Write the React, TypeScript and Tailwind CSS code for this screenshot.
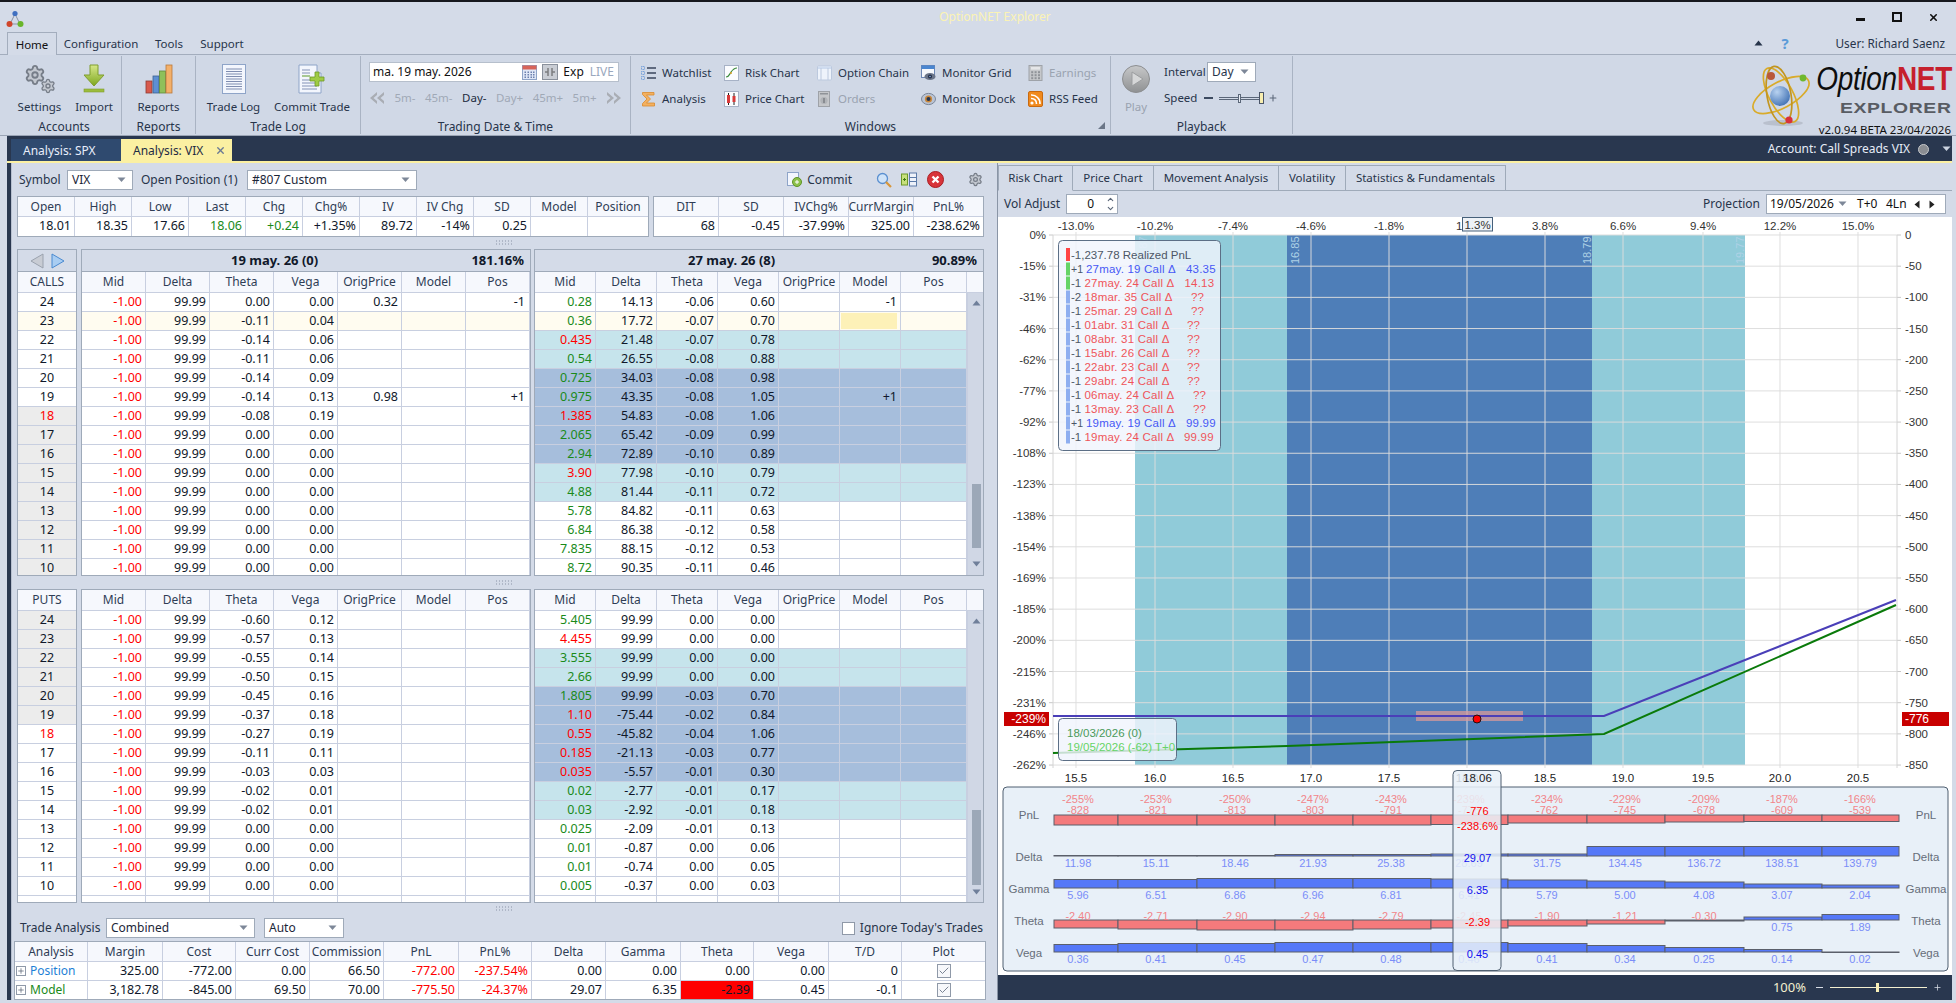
import React from 'react';
import { Settings as Gear, Check, X, Plus, ChevronUp, ChevronDown } from 'lucide-react';

const Caret = ({ c = '#7d8798' }: { c?: string }) => (
  <svg width="9" height="6" viewBox="0 0 9 6" className="shrink-0"><path d="M0.5 0.5h8L4.5 5z" fill={c} /></svg>
);

const Select = ({ w, label }: { w: string; label: string }) => (
  <div className={`${w} h-[20px] bg-white border border-[#9faab9] flex items-center justify-between pl-[4px] pr-[6px] text-[12px] text-[#1b2638] shrink-0`}>
    <span>{label}</span>
    <Caret />
  </div>
);

/* ---------- ribbon icons ---------- */
const AppIcon = () => (
  <svg width="18" height="18" viewBox="0 0 18 18">
    <path d="M9 4L4 14H14Z" fill="none" stroke="#8a93a3" strokeWidth="1" />
    <circle cx="9" cy="3.5" r="2.6" fill="#3f6fc0" />
    <circle cx="3.5" cy="14" r="3" fill="#d0452b" />
    <circle cx="14.5" cy="14" r="3" fill="#69b52b" />
  </svg>
);
const ImportIcon = () => (
  <svg width="22" height="29" viewBox="0 0 22 29">
    <defs><linearGradient id="imp" x1="0" y1="0" x2="0" y2="1"><stop offset="0" stopColor="#d7e88a" /><stop offset="1" stopColor="#7da71f" /></linearGradient></defs>
    <path d="M7 1h8v10h6L11 22 1 11h6z" fill="url(#imp)" stroke="#7f9d2f" strokeWidth="1" />
    <rect x="1" y="25" width="20" height="3" fill="#9cbc3c" stroke="#7f9d2f" strokeWidth="0.6" />
  </svg>
);
const ReportsIcon = () => (
  <svg width="28" height="30" viewBox="0 0 28 30">
    <rect x="1" y="17" width="6" height="12" fill="#d85a4d" stroke="#8f3a33" strokeWidth="0.8" />
    <rect x="8" y="12" width="6" height="17" fill="#5d8fd3" stroke="#3d628f" strokeWidth="0.8" />
    <rect x="14.5" y="7" width="6" height="22" fill="#8fc05a" stroke="#5f8a38" strokeWidth="0.8" />
    <rect x="21" y="1" width="6" height="28" fill="#f3b06a" stroke="#b9793a" strokeWidth="0.8" />
  </svg>
);
const TradeLogIcon = () => (
  <svg width="24" height="30" viewBox="0 0 24 30">
    <rect x="0.5" y="0.5" width="23" height="29" fill="#f3f6fd" stroke="#8ea4c8" />
    {[5, 7.5, 10, 12.5, 15, 17.5, 20, 22.5, 25].map((y) => <line key={y} x1="4" x2="20" y1={y} y2={y} stroke="#7f8db0" strokeWidth="1" />)}
  </svg>
);
const CommitIcon = () => (
  <svg width="28" height="30" viewBox="0 0 28 30">
    <path d="M1 1H19V9H23V29H1Z" fill="#f3f6fd" stroke="#8ea4c8" />
    {[6, 9, 12, 16, 19, 22, 25].map((y) => <line key={y} x1="4" x2={y > 14 ? 19 : 12} y1={y} y2={y} stroke={y === 12 ? '#5a9a2a' : '#8392b6'} strokeWidth="1" />)}
    <path d="M17 8h4v5h5v4h-5v5h-4v-5h-5v-4h5z" fill="#9fcb45" stroke="#6d9a27" strokeWidth="0.8" />
  </svg>
);
const Doc = ({ children }: { children: React.ReactNode }) => (
  <svg width="15" height="16" viewBox="0 0 15 16" className="shrink-0">{children}</svg>
);
const WatchIcon = () => (
  <Doc>
    {[3, 8, 13].map((y) => <rect key={y} x="0.5" y={y - 1.5} width="3" height="3" fill="none" stroke="#5c8fd6" strokeDasharray="1 0.6" strokeWidth="0.8" />)}
    {[3, 8, 13].map((y) => <line key={y} x1="6" x2="15" y1={y} y2={y} stroke="#2f3b52" strokeWidth="1.4" />)}
  </Doc>
);
const SigmaIcon = () => (
  <Doc><path d="M1.5 1.5H13V4L5.5 4 9.5 8 5.5 12H13.5V15H1.5V12.5L6 8 1.5 3.5Z" fill="#f3b060" stroke="#d98a2c" strokeWidth="0.8" /></Doc>
);
const RiskIcon = () => (
  <Doc><rect x="0.5" y="0.5" width="14" height="15" fill="#fbfcff" stroke="#a7b2c6" /><path d="M2 12C5 12 5 10 7 7 8.5 5 10 3 13 3" fill="none" stroke="#3a8a3a" strokeWidth="1.2" /><circle cx="7" cy="8" r="1" fill="#d8a02a" /></Doc>
);
const PriceIcon = () => (
  <Doc><rect x="0.5" y="0.5" width="14" height="15" fill="#fbfcff" stroke="#a7b2c6" /><line x1="4.5" y1="2" x2="4.5" y2="14" stroke="#222" /><rect x="3" y="4" width="3" height="8" fill="#d83a3a" /><line x1="10" y1="2" x2="10" y2="14" stroke="#222" /><rect x="8.5" y="5" width="3" height="6" fill="#d83a3a" /></Doc>
);
const ChainIcon = () => (
  <Doc><rect x="0.5" y="1" width="14" height="14" rx="1" fill="#eef3fb" stroke="#bcc9de" /><rect x="1" y="1.5" width="13" height="2.5" fill="#cfdcf0" /><line x1="4" x2="4" y1="3" y2="15" stroke="#bcc9de" /><line x1="11" x2="11" y1="3" y2="15" stroke="#bcc9de" /></Doc>
);
const GridIcon = () => (
  <Doc><rect x="0.5" y="0.5" width="13" height="12" fill="#f6f8fc" stroke="#6d87b4" /><rect x="0.5" y="0.5" width="13" height="3.5" fill="#4a86d0" /><ellipse cx="9" cy="11.5" rx="5.5" ry="3.6" fill="#6a7488" /><circle cx="9" cy="11.5" r="2" fill="#1e2a44" /><circle cx="9" cy="11.5" r="0.8" fill="#8fb4e4" /></Doc>
);
const DockIcon = () => (
  <Doc><ellipse cx="7.5" cy="8" rx="7" ry="5.6" fill="#b9c3d4" stroke="#7a8699" /><circle cx="7.5" cy="8" r="3.6" fill="#c9873a" /><circle cx="7.5" cy="8" r="2" fill="#263550" /></Doc>
);
const CalcIcon = () => (
  <Doc><rect x="1" y="0.5" width="13" height="15" fill="#c5c7ca" stroke="#9ea2a8" /><rect x="3" y="2" width="9" height="2.6" fill="#e5e6e8" />{[7, 10, 13].flatMap((y) => [3.2, 6.6, 10].map((x) => <rect key={`${x}${y}`} x={x} y={y - 0.8} width="2" height="2" fill="#8f9398" />))}</Doc>
);
const OrdersIcon = () => (
  <Doc><rect x="1.5" y="0.5" width="11" height="15" fill="#c5c7ca" stroke="#9ea2a8" /><rect x="3" y="2" width="8" height="1.5" fill="#8f9398" /><circle cx="7" cy="9.5" r="3.6" fill="#b1b4b8" /><rect x="6.4" y="7" width="1.2" height="5" fill="#6f7378" /></Doc>
);
const RssIcon = () => (
  <Doc><rect x="0.5" y="0.5" width="14" height="15" rx="1.5" fill="#f08a1e" stroke="#c96a10" /><circle cx="4" cy="12" r="1.6" fill="#fff" /><path d="M3 7.5A5 5 0 0 1 8.5 13M3 4A8.5 8.5 0 0 1 12 13" fill="none" stroke="#fff" strokeWidth="1.6" /></Doc>
);
const PlayIcon = () => (
  <svg width="28" height="28" viewBox="0 0 28 28" className="shrink-0">
    <defs><linearGradient id="pl" x1="0" y1="0" x2="0" y2="1"><stop offset="0" stopColor="#c7c8c9" /><stop offset="1" stopColor="#8f9193" /></linearGradient></defs>
    <circle cx="14" cy="14" r="13.5" fill="url(#pl)" stroke="#8c8e90" />
    <path d="M10 7L21 14 10 21Z" fill="#d6d7d8" stroke="#9b9d9f" />
  </svg>
);
const Atom = () => (
  <svg width="64" height="64" viewBox="0 0 64 64" className="shrink-0">
    <ellipse cx="34" cy="60" rx="20" ry="3" fill="#aab1bd" opacity="0.6" />
    <g fill="none" stroke="#d9ab2a" strokeWidth="1.7">
      <ellipse cx="32" cy="32" rx="31" ry="13" transform="rotate(-28 32 32)" />
      <ellipse cx="32" cy="32" rx="30" ry="12" transform="rotate(62 32 32)" />
      <ellipse cx="30" cy="32" rx="29" ry="12" transform="rotate(80 30 32)" stroke="#c29520" />
    </g>
    <defs><radialGradient id="nu" cx="0.35" cy="0.3" r="0.8"><stop offset="0" stopColor="#b8d2f0" /><stop offset="1" stopColor="#3a6cb0" /></radialGradient></defs>
    <circle cx="31" cy="33" r="10" fill="url(#nu)" />
    <circle cx="22" cy="13" r="4" fill="#b9583a" />
    <circle cx="54" cy="15" r="3.4" fill="#6eb82e" />
    <circle cx="40" cy="57" r="3.6" fill="#d8313a" />
  </svg>
);

/* ---------- ribbon pieces ---------- */
const RGroup = ({ w, label, children, extra }: { w: string; label: string; children: React.ReactNode; extra?: React.ReactNode }) => (
  <div className={`${w} shrink-0 flex flex-col border-r border-[#a9b3c3] h-[78px] my-auto relative`}>
    <div className="h-[61px] flex">{children}</div>
    <div className="h-[17px] flex items-center justify-center text-[12px] text-[#27344a] pt-[2px]">{label}</div>
    {extra}
  </div>
);
const BigBtn = ({ w, icon, text, gray }: { w: string; icon: React.ReactNode; text: string; gray?: boolean }) => (
  <div className={`${w} flex flex-col items-center pt-[7px]`}>
    <div className="h-[31px] flex items-center justify-center">{icon}</div>
    <div className={`mt-[5px] h-[16px] flex items-center text-[11.5px] whitespace-nowrap ${gray ? 'text-[#9aa3b0]' : 'text-[#27344a]'}`}>{text}</div>
  </div>
);
const WinBtn = ({ icon, text, gray }: { icon: React.ReactNode; text: string; gray?: boolean }) => (
  <div className="flex items-center gap-[6px] h-[26px] whitespace-nowrap">
    {icon}
    <span className={`text-[11.5px] ${gray ? 'text-[#9aa3b0]' : 'text-[#27344a]'}`}>{text}</span>
  </div>
);

/* ---------- data ---------- */
type RowL = [number, string, string, string?, string?];
const callsL: RowL[] = [
  [24, '0.00', '0.00', '0.32', '-1'], [23, '-0.11', '0.04'], [22, '-0.14', '0.06'], [21, '-0.11', '0.06'], [20, '-0.14', '0.09'],
  [19, '-0.14', '0.13', '0.98', '+1'], [18, '-0.08', '0.19'], [17, '0.00', '0.00'], [16, '0.00', '0.00'], [15, '0.00', '0.00'],
  [14, '0.00', '0.00'], [13, '0.00', '0.00'], [12, '0.00', '0.00'], [11, '0.00', '0.00'], [10, '0.00', '0.00'],
];
const putsL: RowL[] = [
  [24, '-0.60', '0.12'], [23, '-0.57', '0.13'], [22, '-0.55', '0.14'], [21, '-0.50', '0.15'], [20, '-0.45', '0.16'], [19, '-0.37', '0.18'],
  [18, '-0.27', '0.19'], [17, '-0.11', '0.11'], [16, '-0.03', '0.03'], [15, '-0.02', '0.01'], [14, '-0.02', '0.01'], [13, '0.00', '0.00'],
  [12, '0.00', '0.00'], [11, '0.00', '0.00'], [10, '0.00', '0.00'],
];
type RowR = [string, boolean, string, string, string, string?];
const callsR: RowR[] = [
  ['0.28', true, '14.13', '-0.06', '0.60', '-1'], ['0.36', true, '17.72', '-0.07', '0.70'], ['0.435', false, '21.48', '-0.07', '0.78'],
  ['0.54', true, '26.55', '-0.08', '0.88'], ['0.725', true, '34.03', '-0.08', '0.98'], ['0.975', true, '43.35', '-0.08', '1.05', '+1'],
  ['1.385', false, '54.83', '-0.08', '1.06'], ['2.065', true, '65.42', '-0.09', '0.99'], ['2.94', true, '72.89', '-0.10', '0.89'],
  ['3.90', false, '77.98', '-0.10', '0.79'], ['4.88', true, '81.44', '-0.11', '0.72'], ['5.78', true, '84.82', '-0.11', '0.63'],
  ['6.84', true, '86.38', '-0.12', '0.58'], ['7.835', true, '88.15', '-0.12', '0.53'], ['8.72', true, '90.35', '-0.11', '0.46'],
];
const putsR: RowR[] = [
  ['5.405', true, '99.99', '0.00', '0.00'], ['4.455', false, '99.99', '0.00', '0.00'], ['3.555', true, '99.99', '0.00', '0.00'],
  ['2.66', true, '99.99', '0.00', '0.00'], ['1.805', true, '99.99', '-0.03', '0.70'], ['1.10', false, '-75.44', '-0.02', '0.84'],
  ['0.55', false, '-45.82', '-0.04', '1.06'], ['0.185', false, '-21.13', '-0.03', '0.77'], ['0.035', false, '-5.57', '-0.01', '0.30'],
  ['0.02', true, '-2.77', '-0.01', '0.17'], ['0.03', true, '-2.92', '-0.01', '0.18'], ['0.025', true, '-2.09', '-0.01', '0.13'],
  ['0.01', true, '-0.87', '0.00', '0.06'], ['0.01', true, '-0.74', '0.00', '0.05'], ['0.005', true, '-0.37', '0.00', '0.03'],
];
const bandC = ['bg-white', 'bg-[#fffcf0]', 'bg-[#c6e4ec]', 'bg-[#c6e4ec]', 'bg-[#a6bedc]', 'bg-[#a6bedc]', 'bg-[#a6bedc]', 'bg-[#a6bedc]', 'bg-[#a6bedc]', 'bg-[#c6e4ec]', 'bg-[#c6e4ec]', 'bg-white', 'bg-white', 'bg-white', 'bg-white'];
const bandP = ['bg-white', 'bg-white', 'bg-[#c6e4ec]', 'bg-[#c6e4ec]', 'bg-[#a6bedc]', 'bg-[#a6bedc]', 'bg-[#a6bedc]', 'bg-[#a6bedc]', 'bg-[#a6bedc]', 'bg-[#c6e4ec]', 'bg-[#c6e4ec]', 'bg-white', 'bg-white', 'bg-white', 'bg-white'];

const numCell = 'h-full flex items-center justify-end pr-[3px] border-r border-[#c8cfe0] shrink-0 text-[12.5px]';
const hdrCell = 'h-full flex items-center justify-center border-r border-[#c8cfe0] shrink-0 text-[12px] text-[#2f3d55]';
const rowCls = 'h-[19px] flex border-b border-[#c8cfe0] shrink-0';
const HDRS = ['Mid', 'Delta', 'Theta', 'Vega', 'OrigPrice', 'Model', 'Pos'];
const RED = 'text-[#ff0000]';
const GRN = 'text-[#1a8a1a]';
const INK = 'text-[#10182a]';

const LeftGrid = ({ rows, title, cream }: { rows: RowL[]; title?: boolean; cream?: boolean }) => (
  <div className="w-[450px] shrink-0 h-full border border-[#9faab9] bg-white flex flex-col overflow-hidden">
    {title && (
      <div className="h-[22px] shrink-0 bg-[#d4dbe8] border-b border-[#9faab9] flex items-center justify-between pl-[149px] pr-[6px] pt-[1px] text-[13px] font-bold text-[#10182a]">
        <span>19 may. 26 (0)</span><span>181.16%</span>
      </div>
    )}
    <div className="h-[21px] shrink-0 bg-[#f6f8fd] border-b border-[#c8cfe0] flex">
      {HDRS.map((h) => <div key={h} className={`${hdrCell} w-[64px]`}>{h}</div>)}
    </div>
    {rows.map((r, i) => (
      <div key={i} className={`${rowCls} ${cream && r[0] === 23 ? 'bg-[#fffcf0]' : ''}`}>
        <div className={`${numCell} w-[64px] ${RED}`}>-1.00</div>
        <div className={`${numCell} w-[64px] ${INK}`}>99.99</div>
        <div className={`${numCell} w-[64px] ${INK}`}>{r[1]}</div>
        <div className={`${numCell} w-[64px] ${INK}`}>{r[2]}</div>
        <div className={`${numCell} w-[64px] ${INK}`}>{r[3] ?? ''}</div>
        <div className={`${numCell} w-[64px]`} />
        <div className={`${numCell} w-[64px] ${INK} pr-[4px]`}>{r[4] ?? ''}</div>
      </div>
    ))}
    <div className="flex-1 flex">{HDRS.map((h) => <div key={h} className="w-[64px] border-r border-[#c8cfe0]" />)}</div>
  </div>
);

const Scroll = ({ top, h }: { top: string; h: string }) => (
  <div className="w-[17px] shrink-0 bg-[#d0d7e5] h-full flex flex-col items-center border-l border-[#c8cfe0]">
    <div className="h-[14px] flex items-center mt-[3px]"><svg width="9" height="6" viewBox="0 0 9 6"><path d="M0.5 5.5h8L4.5 0.5z" fill="#6f7f9a" /></svg></div>
    <div className="flex-1 w-full flex flex-col items-center">
      <div className={top} />
      <div className={`w-[9px] bg-[#9ca8b8] ${h}`} />
      <div className="flex-1" />
    </div>
    <div className="h-[14px] flex items-center mb-[4px]"><svg width="9" height="6" viewBox="0 0 9 6"><path d="M0.5 0.5h8L4.5 5.5z" fill="#6f7f9a" /></svg></div>
  </div>
);

const RightGrid = ({ rows, band, title, thumbTop, thumbH }: { rows: RowR[]; band: string[]; title?: boolean; thumbTop: string; thumbH: string }) => (
  <div className="w-[450px] shrink-0 h-full border border-[#9faab9] bg-white flex flex-col overflow-hidden">
    {title && (
      <div className="h-[22px] shrink-0 bg-[#d4dbe8] border-b border-[#9faab9] flex items-center justify-between pl-[153px] pr-[6px] pt-[1px] text-[13px] font-bold text-[#10182a]">
        <span>27 may. 26 (8)</span><span>90.89%</span>
      </div>
    )}
    <div className="h-[21px] shrink-0 bg-[#f6f8fd] border-b border-[#c8cfe0] flex">
      {HDRS.map((h) => <div key={h} className={`${hdrCell} ${h === 'Pos' ? 'w-[66px]' : 'w-[61px]'}`}>{h}</div>)}
      <div className="flex-1" />
    </div>
    <div className="flex-1 flex min-h-0">
      <div className="w-[432px] shrink-0 flex flex-col">
        {rows.map((r, i) => (
          <div key={i} className={`${rowCls} ${band[i]}`}>
            <div className={`${numCell} w-[61px] ${r[1] ? GRN : RED}`}>{r[0]}</div>
            <div className={`${numCell} w-[61px] ${INK}`}>{r[2]}</div>
            <div className={`${numCell} w-[61px] ${INK}`}>{r[3]}</div>
            <div className={`${numCell} w-[61px] ${INK}`}>{r[4]}</div>
            <div className={`${numCell} w-[61px]`} />
            <div className={`${numCell} w-[61px] ${INK} ${title && i === 1 ? 'p-[1px] pr-[1px]' : ''}`}>
              {title && i === 1 ? <div className="w-full h-full bg-[#fdf1b8]" /> : r[5] ?? ''}
            </div>
            <div className={`${numCell} w-[66px]`} />
          </div>
        ))}
        <div className="flex-1 flex">
          {[61, 61, 61, 61, 61, 61].map((_, i) => <div key={i} className="w-[61px] border-r border-[#c8cfe0]" />)}
          <div className="w-[66px] border-r border-[#c8cfe0]" />
        </div>
      </div>
      <Scroll top={thumbTop} h={thumbH} />
    </div>
  </div>
);

const StrikeCol = ({ head, rows, gray, title }: { head: string; rows: number[]; gray: (k: number) => boolean; title?: boolean }) => (
  <div className="w-[60px] shrink-0 h-full border border-[#9faab9] bg-white flex flex-col overflow-hidden">
    {title && (
      <div className="h-[22px] shrink-0 bg-[#d4dbe8] border-b border-[#9faab9] flex items-center justify-center gap-[7px]">
        <svg width="14" height="16" viewBox="0 0 14 16"><path d="M13 1V15L1 8Z" fill="#c8ccd4" stroke="#9aa2ae" /></svg>
        <svg width="14" height="16" viewBox="0 0 14 16"><path d="M1 1V15L13 8Z" fill="#a9cdf2" stroke="#4a8ad0" /></svg>
      </div>
    )}
    <div className="h-[21px] shrink-0 bg-[#f6f8fd] border-b border-[#c8cfe0] flex items-center justify-center text-[12px] text-[#2f3d55]">{head}</div>
    {rows.map((k) => (
      <div key={k} className={`${rowCls} items-center justify-center text-[12.5px] ${k === 18 ? RED : INK} ${gray(k) ? 'bg-[#ececec]' : k === 23 && title ? 'bg-[#fffcf0]' : ''}`}>{k}</div>
    ))}
  </div>
);

const Splitter = ({ h }: { h: string }) => (
  <div className={`${h} shrink-0 flex items-center justify-start pl-[479px]`}>
    <svg width="18" height="6" viewBox="0 0 18 6">
      {[0, 3, 6, 9, 12, 15].flatMap((x) => [0.5, 3.5].map((y) => <rect key={`${x}-${y}`} x={x} y={y} width="1" height="1" fill="#8a94a6" />))}
    </svg>
  </div>
);

const tdTop = ['Open', 'High', 'Low', 'Last', 'Chg', 'Chg%', 'IV', 'IV Chg', 'SD'];
const tdVal: [string, string][] = [['18.01', INK], ['18.35', INK], ['17.66', INK], ['18.06', GRN], ['+0.24', GRN], ['+1.35%', INK], ['89.72', INK], ['-14%', INK], ['0.25', INK]];
const td2: [string, string][] = [['DIT', '68'], ['SD', '-0.45'], ['IVChg%', '-37.99%'], ['CurrMargin', '325.00'], ['PnL%', '-238.62%']];

const taCols = ['w-[73px]', 'w-[75px]', 'w-[73px]', 'w-[74px]', 'w-[74px]', 'w-[75px]', 'w-[73px]', 'w-[74px]', 'w-[75px]', 'w-[73px]', 'w-[75px]', 'w-[73px]', 'w-[84px]'];
const taHead = ['Analysis', 'Margin', 'Cost', 'Curr Cost', 'Commission', 'PnL', 'PnL%', 'Delta', 'Gamma', 'Theta', 'Vega', 'T/D', 'Plot'];
const taRows: { name: string; color: string; vals: string[] }[] = [
  { name: 'Position', color: 'text-[#1e7fd6]', vals: ['325.00', '-772.00', '0.00', '66.50', '-772.00', '-237.54%', '0.00', '0.00', '0.00', '0.00', '0'] },
  { name: 'Model', color: 'text-[#1a8a1a]', vals: ['3,182.78', '-845.00', '69.50', '70.00', '-775.50', '-24.37%', '29.07', '6.35', '-2.39', '0.45', '-0.1'] },
];

/* ---------- chart ---------- */
const F = '"Liberation Sans", Arial, sans-serif';
const gridX = [1076, 1155, 1233, 1311, 1389, 1467, 1545, 1623, 1703, 1780, 1858];
const pctX = ['-13.0%', '-10.2%', '-7.4%', '-4.6%', '-1.8%', '', '3.8%', '6.6%', '9.4%', '12.2%', '15.0%'];
const priceX = ['15.5', '16.0', '16.5', '17.0', '17.5', '18.0', '18.5', '19.0', '19.5', '20.0', '20.5'];
const leftY = ['0%', '-15%', '-31%', '-46%', '-62%', '-77%', '-92%', '-108%', '-123%', '-138%', '-154%', '-169%', '-185%', '-200%', '-215%', '-231%', '-246%', '-262%'];
const yAt = (i: number) => 235 + i * 31.18;
const legend: [string, string, string, boolean, number, string][] = [
  ['+1', '27may. 19 Call Δ', '43.35', true, 1186, '#66d466'],
  ['-1', '27may. 24 Call Δ', '14.13', false, 1184.5, '#66d466'],
  ['-2', '18mar. 35 Call Δ', '??', false, 1191, '#8eaef0'],
  ['-1', '25mar. 29 Call Δ', '??', false, 1191, '#8eaef0'],
  ['-1', '01abr. 31 Call Δ', '??', false, 1187, '#8eaef0'],
  ['-1', '08abr. 31 Call Δ', '??', false, 1187, '#8eaef0'],
  ['-1', '15abr. 26 Call Δ', '??', false, 1187, '#8eaef0'],
  ['-1', '22abr. 23 Call Δ', '??', false, 1187, '#8eaef0'],
  ['-1', '29abr. 24 Call Δ', '??', false, 1187, '#8eaef0'],
  ['-1', '06may. 24 Call Δ', '??', false, 1193, '#8eaef0'],
  ['-1', '13may. 23 Call Δ', '??', false, 1193, '#8eaef0'],
  ['+1', '19may. 19 Call Δ', '99.99', true, 1186, '#8eaef0'],
  ['-1', '19may. 24 Call Δ', '99.99', false, 1184, '#8eaef0'],
];
const segX = [1054, 1118, 1197, 1275, 1353, 1431, 1508, 1587, 1665, 1744, 1822, 1899];
const labX = [1078, 1156, 1235, 1313, 1391, 1469, 1547, 1625, 1704, 1782, 1860];
const RB = '#f47a7c';
const BB = '#5578f8';
const LR = '#f28589';
const LB = '#7a8df8';
const Bars = ({ base, ends }: { base: number; ends: number[] }) => (
  <g stroke="#5a5f6a" strokeWidth="1">
    {ends.map((e, i) => {
      const a = Math.min(base, e), b = Math.max(base, e);
      const pos = e < base;
      return <rect key={i} x={segX[i]} width={segX[i + 1] - segX[i]} y={a} height={Math.max(b - a, 0.5)} fill={pos ? BB : RB} />;
    })}
  </g>
);
const pnlPct = ['-255%', '-253%', '-250%', '-247%', '-243%', '-239%', '-234%', '-229%', '-209%', '-187%', '-166%'];
const pnlVal = ['-828', '-821', '-813', '-803', '-791', '-778', '-762', '-745', '-678', '-609', '-539'];
const deltaV = ['11.98', '15.11', '18.46', '21.93', '25.38', '28.69', '31.75', '134.45', '136.72', '138.51', '139.79'];
const gammaV = ['5.96', '6.51', '6.86', '6.96', '6.81', '6.41', '5.79', '5.00', '4.08', '3.07', '2.04'];
const thetaV = ['-2.40', '-2.71', '-2.90', '-2.94', '-2.79', '-2.45', '-1.90', '-1.21', '-0.30', '0.75', '1.89'];
const vegaV = ['0.36', '0.41', '0.45', '0.47', '0.48', '0.46', '0.41', '0.34', '0.25', '0.14', '0.02'];

const Chart = () => (
  <svg width="954" height="758" viewBox="998 217 954 758" className="block shrink-0" style={{ fontFamily: F }}>
    <rect x="998" y="217" width="954" height="758" fill="#ffffff" />
    {/* zones */}
    <rect x="1135" y="235" width="610" height="530" fill="#90cbd9" />
    <rect x="1287" y="235" width="305" height="530" fill="#4e7eb8" />
    {/* band labels */}
    {[[1147, '15.87'], [1299, '16.85'], [1591, '18.79'], [1744, '19.77']].map(([x, t]) => (
      <text key={t as string} transform={`translate(${x} 264) rotate(-90)`} fontSize="11" fill="#aed2e6">{t}</text>
    ))}
    {/* grid */}
    {leftY.map((_, i) => (
      <g key={i}>
        <line x1="1053" x2="1897" y1={yAt(i)} y2={yAt(i)} stroke="#dcdcdc" strokeOpacity="0.95" />
        <line x1="1049" x2="1053" y1={yAt(i)} y2={yAt(i)} stroke="#c8c8c8" />
        <line x1="1897" x2="1901" y1={yAt(i)} y2={yAt(i)} stroke="#c8c8c8" />
      </g>
    ))}
    {gridX.map((x) => <line key={x} x1={x} x2={x} y1="232" y2="768" stroke="#dcdcdc" strokeOpacity="0.95" />)}
    <line x1="1053" x2="1053" y1="235" y2="768" stroke="#d4d4d4" />
    <line x1="1897" x2="1897" y1="235" y2="768" stroke="#d4d4d4" />
    {/* axes text */}
    {pctX.map((t, i) => <text key={i} x={gridX[i]} y="230" fontSize="11.5" textAnchor="middle" fill="#333">{t}</text>)}
    <text x="1456" y="230" fontSize="11.5" fill="#333">1</text>
    <rect x="1462.5" y="217.5" width="30" height="13.5" fill="#eef2f7" stroke="#46607a" />
    <text x="1477.5" y="229" fontSize="11.5" textAnchor="middle" fill="#333">1.3%</text>
    {leftY.map((t, i) => <text key={t} x="1046" y={yAt(i) + 4} fontSize="11.5" textAnchor="end" fill="#333">{t}</text>)}
    {leftY.map((_, i) => <text key={i} x="1905" y={yAt(i) + 4} fontSize="11.5" fill="#333">{i === 0 ? '0' : `-${i * 50}`}</text>)}
    {priceX.map((t, i) => <text key={t} x={gridX[i]} y="782" fontSize="11.5" textAnchor="middle" fill="#222">{t}</text>)}

    {/* risk lines */}
    <rect x="1416" y="711" width="107" height="10" fill="#d89a9a" fillOpacity="0.75" />
    <polyline points="1053,753 1287,746 1500,738 1604,734 1896,605" fill="none" stroke="#0a7a0a" strokeWidth="2" />
    <polyline points="1053,716 1604,716 1896,600" fill="none" stroke="#4a3fb8" strokeWidth="2.2" />
    <circle cx="1477" cy="719" r="4" fill="#ff0000" stroke="#201010" strokeWidth="1" />

    {/* value tags */}
    <rect x="1004" y="712" width="45" height="14" fill="#c80000" />
    <text x="1046" y="723" fontSize="12" textAnchor="end" fill="#fff">-239%</text>
    <rect x="1902" y="712" width="47" height="14" fill="#c80000" />
    <text x="1905" y="723" fontSize="12" fill="#fff">-776</text>

    {/* position legend */}
    <rect x="1058.5" y="240.5" width="162" height="210" rx="4" fill="#f0f4fc" fillOpacity="0.82" stroke="#5c6f86" />
    <rect x="1066" y="248" width="4" height="13" fill="#ff4444" />
    <text x="1071" y="259" fontSize="11.5" fill="#4c5666">-1,237.78 Realized PnL</text>
    {legend.map((r, i) => {
      const y = 269 + i * 14;
      const col = r[3] ? '#4658f5' : '#ef545a';
      return (
        <g key={i}>
          <rect x="1066" y={y - 6.5} width="4" height="13" fill={r[5]} />
          <text x="1071" y={y + 4} fontSize={r[0] === '+1' ? 10.5 : 11.5} fill="#4c5666">{r[0]}</text>
          <text x={r[0] === '+1' ? 1086 : 1084.5} y={y + 4} fontSize="11.5" letterSpacing="0.2" fill={col}>{r[1]}</text>
          <text x={r[4]} y={y + 4} fontSize="11.5" letterSpacing="0.2" fill={col}>{r[2]}</text>
        </g>
      );
    })}
    {/* date legend */}
    <rect x="1058.5" y="718.5" width="118" height="42" rx="4" fill="#f0f4fc" fillOpacity="0.82" stroke="#5c6f86" />
    <text x="1067" y="737" fontSize="11.5" fill="#4a9a5a">18/03/2026 (0)</text>
    <text x="1067" y="751" fontSize="11.5" fill="#66d466">19/05/2026 (-62) T+0</text>

    {/* greeks panel */}
    <rect x="1003" y="787" width="945" height="184" rx="4" fill="#e8f0f8" stroke="#4f5f70" strokeWidth="1" />
    {[['PnL', 819], ['Delta', 861], ['Gamma', 893], ['Theta', 925], ['Vega', 957]].map(([t, y]) => (
      <g key={t as string} fontSize="11.5" fill="#666d78" textAnchor="middle">
        <text x="1029" y={y}>{t}</text>
        <text x="1926" y={y}>{t}</text>
      </g>
    ))}
    <Bars base={815} ends={[825, 825, 825, 825, 825, 824.5, 823, 823, 822, 821.5, 821.5]} />
    <Bars base={856} ends={[855.5, 855.5, 855.5, 854.5, 854.5, 854, 854, 846.5, 846.5, 846.5, 846.5]} />
    <Bars base={888} ends={[879.5, 879.5, 878.5, 878.5, 878.5, 879, 880, 881, 882, 884, 885]} />
    <Bars base={920} ends={[928, 929, 930, 930, 929, 928, 926, 924, 921, 917, 914.5]} />
    <Bars base={952} ends={[944.5, 943.5, 943.5, 942.5, 942.5, 942.5, 943.5, 945.5, 947.5, 949.5, 952]} />
    <g fontSize="11" textAnchor="middle">
      {labX.map((x, i) => (
        <g key={x}>
          <text x={x} y="803" fill={LR}>{pnlPct[i]}</text>
          <text x={x} y="814" fill={LR}>{pnlVal[i]}</text>
          <text x={x} y="867" fill={LB}>{deltaV[i]}</text>
          <text x={x} y="899" fill={LB}>{gammaV[i]}</text>
          <text x={x} y={thetaV[i][0] === '-' ? 920 : 931} fill={thetaV[i][0] === '-' ? LR : LB}>{thetaV[i]}</text>
          <text x={x} y="963" fill={LB}>{vegaV[i]}</text>
        </g>
      ))}
    </g>
    {/* cursor box */}
    <rect x="1453" y="770.5" width="48" height="200" rx="4" fill="#e8f0f8" fillOpacity="0.86" stroke="#4f5f70" />
    <g textAnchor="middle">
      <text x="1477.5" y="782" fontSize="11.5" fill="#222">18.06</text>
      <text x="1477.5" y="815" fontSize="11" fill="#f00">-776</text>
      <text x="1477.5" y="830" fontSize="11" fill="#f00">-238.6%</text>
      <text x="1477.5" y="862" fontSize="11" fill="#1010ee">29.07</text>
      <text x="1477.5" y="894" fontSize="11" fill="#1010ee">6.35</text>
      <text x="1477.5" y="926" fontSize="11" fill="#f00">-2.39</text>
      <text x="1477.5" y="958" fontSize="11" fill="#1010ee">0.45</text>
    </g>
  </svg>
);

const tabs: [string, string][] = [['Risk Chart', 'w-[75px]'], ['Price Chart', 'w-[81px]'], ['Movement Analysis', 'w-[125px]'], ['Volatility', 'w-[67px]'], ['Statistics & Fundamentals', 'w-[160px]']];

export default function App() {
  return (
    <div className="w-[1956px] h-[1003px] bg-[#d4dbe8] overflow-hidden flex flex-col border-t-2 border-[#16181d] relative text-[#1b2638]" style={{ fontFamily: '"Noto Sans", sans-serif' }}>
      {/* title */}
      <div className="h-[30px] shrink-0 flex items-center relative pl-[6px]">
        <div className="mt-[3px]"><AppIcon /></div>
        <div className="flex-1 flex justify-center text-[12px] text-[#fbf3b4] ml-[110px]">OptionNET Explorer</div>
        <div className="flex items-center w-[100px] shrink-0 pr-[17px] justify-between">
          <div className="w-[9px] h-[3px] bg-[#111] mt-[4px]" />
          <div className="w-[10px] h-[10px] border-2 border-[#111]" />
          <X size={11} strokeWidth={3.5} className="text-[#111]" />
        </div>
      </div>
      {/* ribbon tabs */}
      <div className="h-[23px] shrink-0 flex items-end border-b border-[#a3adbd] pl-[7px] text-[11.5px] text-[#27344a] pr-[11px]">
        <div className="w-[50px] h-[23px] -mb-px bg-[#d4dbe8] border border-b-0 border-[#a3adbd] flex items-center justify-center text-[#111] pt-[1px]">Home</div>
        <div className="ml-[8px] w-[72px] h-[22px] flex items-center justify-center whitespace-nowrap pt-[1px]">Configuration</div>
        <div className="ml-[18px] w-[28px] h-[22px] flex items-center justify-center pt-[1px]">Tools</div>
        <div className="ml-[17px] w-[44px] h-[22px] flex items-center justify-center pt-[1px]">Support</div>
        <div className="flex-1" />
        <div className="h-[22px] flex items-center"><svg width="9" height="6" viewBox="0 0 9 6"><path d="M0.5 5.5h8L4.5 0.5z" fill="#26344a" /></svg></div>
        <div className="ml-[18px] h-[22px] flex items-center text-[15px] font-bold text-[#5b9bd8] w-[12px]">?</div>
        <div className="ml-[42px] h-[22px] flex items-center whitespace-nowrap text-[11.8px] pt-[1px]">User: Richard Saenz</div>
      </div>
      {/* ribbon */}
      <div className="h-[81px] shrink-0 flex pl-[7px] bg-[#d0d8e6] border-b border-[#9aa4b5]">
        <RGroup w="w-[115px]" label="Accounts">
          <div className="w-[5px]" />
          <BigBtn w="w-[55px]" icon={<div className="relative w-[32px] h-[30px]"><Gear size={22} strokeWidth={2} className="absolute left-0 top-0 text-[#767d88] fill-[#c3c8d0]" /><Gear size={16} strokeWidth={2} className="absolute right-0 bottom-0 text-[#767d88] fill-[#c3c8d0]" /></div>} text="Settings" />
          <BigBtn w="w-[54px]" icon={<ImportIcon />} text="Import" />
        </RGroup>
        <RGroup w="w-[74px]" label="Reports">
          <BigBtn w="w-[74px]" icon={<ReportsIcon />} text="Reports" />
        </RGroup>
        <RGroup w="w-[165px]" label="Trade Log">
          <BigBtn w="w-[75px]" icon={<TradeLogIcon />} text="Trade Log" />
          <BigBtn w="w-[82px]" icon={<CommitIcon />} text="Commit Trade" />
        </RGroup>
        <RGroup w="w-[270px]" label="Trading Date & Time">
          <div className="pl-[8px] pt-[6px] flex flex-col w-full">
            <div className="w-[250px] h-[20px] bg-white border border-[#b6bfcc] flex items-center pl-[3px] pr-[2px] text-[12px] text-[#111]">
              <span className="flex-1">ma. 19 may. 2026</span>
              <svg width="15" height="15" viewBox="0 0 15 15" className="mr-[5px]"><rect x="0.5" y="0.5" width="14" height="14" fill="#dfe7f7" stroke="#8ea4c8" /><rect x="0.5" y="0.5" width="14" height="4" fill="#d8645a" />{[6.5, 9, 11.5].flatMap((y) => [2.5, 5.5, 8.5, 11].map((x) => <rect key={`${x}${y}`} x={x} y={y} width="1.5" height="1.5" fill="#6c80ad" />))}</svg>
              <div className="w-[16px] h-[16px] bg-[#c9cdd4] border border-[#8a919c] flex items-center justify-center mr-[5px]"><svg width="10" height="10" viewBox="0 0 10 10"><path d="M3 1v8M7 1v8M0 5h2.5M7.5 5H10" stroke="#555" /></svg></div>
              <span className="mr-[6px] text-[#111]">Exp</span>
              <span className="text-[#9aa8bd] mr-[2px]">LIVE</span>
            </div>
            <div className="h-[20px] mt-[6px] flex items-center justify-between text-[11.5px] text-[#a0a9b6] w-[253px]">
              <svg width="16" height="16" viewBox="0 0 16 16"><path d="M8 2L1 8l7 6V11L4.5 8 8 5zM15 2L8 8l7 6V11L11.5 8 15 5z" fill="#a9adb4" /></svg>
              <span>5m-</span><span>45m-</span><span className="text-[#222c3e]">Day-</span><span>Day+</span><span>45m+</span><span>5m+</span>
              <svg width="16" height="16" viewBox="0 0 16 16"><path d="M8 2l7 6-7 6V11l3.5-3L8 5zM1 2l7 6-7 6V11l3.5-3L1 5z" fill="#a9adb4" /></svg>
            </div>
          </div>
        </RGroup>
        <RGroup w="w-[480px]" label="Windows" extra={<svg width="7" height="7" viewBox="0 0 7 7" className="absolute right-[5px] bottom-[5px]"><path d="M7 0V7H0Z" fill="#6b7687" /></svg>}>
          <div className="pl-[10px] pt-[4px] grid grid-cols-[83px_93px_104px_107px_70px] grid-rows-[26px_26px]">
            <WinBtn icon={<WatchIcon />} text="Watchlist" />
            <WinBtn icon={<RiskIcon />} text="Risk Chart" />
            <WinBtn icon={<ChainIcon />} text="Option Chain" />
            <WinBtn icon={<GridIcon />} text="Monitor Grid" />
            <WinBtn icon={<CalcIcon />} text="Earnings" gray />
            <WinBtn icon={<SigmaIcon />} text="Analysis" />
            <WinBtn icon={<PriceIcon />} text="Price Chart" />
            <WinBtn icon={<OrdersIcon />} text="Orders" gray />
            <WinBtn icon={<DockIcon />} text="Monitor Dock" />
            <WinBtn icon={<RssIcon />} text="RSS Feed" />
          </div>
        </RGroup>
        <RGroup w="w-[182px]" label="Playback">
          <BigBtn w="w-[50px]" icon={<PlayIcon />} text="Play" gray />
          <div className="pt-[6px] pl-[3px] flex flex-col text-[11.5px] text-[#27344a]">
            <div className="flex items-center h-[20px]">
              <span className="w-[43px]">Interval</span>
              <div className="w-[49px] h-[20px] bg-white border border-[#9faab9] flex items-center justify-between pl-[4px] pr-[6px] text-[12px]"><span>Day</span><Caret /></div>
            </div>
            <div className="flex items-center h-[20px] mt-[6px]">
              <span className="w-[40px]">Speed</span>
              <div className="w-[9px] h-[2px] bg-[#3c4a60]" />
              <div className="ml-[6px] w-[40px] h-[3px] border-y border-[#5a6678] relative flex items-center justify-center">
                <div className="w-[3px] h-[9px] bg-[#e8ecf3] border border-[#5a6678] shrink-0" />
              </div>
              <div className="w-[5px] h-[12px] bg-[#f8eeb0] border border-[#4a5568]" />
              <Plus size={10} strokeWidth={2.5} className="ml-[4px] text-[#5a6678]" />
            </div>
          </div>
        </RGroup>
        <div className="flex-1 flex justify-end pr-[4px]">
          <div className="mt-[8px]"><Atom /></div>
          <div className="flex flex-col items-end w-[139px] shrink-0" style={{ fontFamily: '"Liberation Sans", sans-serif' }}>
            <div className="h-[40px] mt-[8px] flex items-center text-[28px] leading-none tracking-[-0.3px] whitespace-nowrap scale-y-[1.2] origin-bottom">
              <span className="italic text-[#0d0d0d]">Option</span><span className="text-[#c6202d] font-bold">NET</span>
            </div>
            <div className="text-[15px] leading-none font-bold tracking-[0.5px] text-[#585c63] -mt-[3px] whitespace-nowrap scale-x-[1.29] origin-right">EXPLORER</div>
          </div>
        </div>
      </div>
      <div className="absolute right-[5px] top-[119px] text-[11.5px] text-[#111] whitespace-nowrap">v2.0.94 BETA 23/04/2026</div>

      {/* navy shell */}
      <div className="flex-1 min-h-0 ml-[7px] mr-[4px] mb-[3px] bg-[#29374f] flex flex-col">
        <div className="h-[25px] shrink-0 flex items-end pl-[4px] text-[12px]">
          <div className="w-[110px] h-[22px] bg-[#2f4a6f] text-[#e8eefb] flex items-center pl-[12px] pt-[1px]">Analysis: SPX</div>
          <div className="w-[111px] h-[22px] bg-[#fbf0a2] text-[#1f2c44] flex items-center pl-[12px] gap-[12px] pt-[1px]">
            <span>Analysis: VIX</span><X size={11} strokeWidth={3} className="text-[#6b7a94]" />
          </div>
          <div className="flex-1" />
          <div className="h-[25px] flex items-center text-[#e6ecf7] gap-[7px] pt-[1px]">
            <span>Account: Call Spreads VIX</span>
            <div className="ml-[1px] w-[11px] h-[11px] rounded-full bg-[#8a8d92] border border-[#c5c7ca]" />
            <div className="ml-[6px] mr-[1px]"><Caret c="#cbd3e0" /></div>
          </div>
        </div>
        <div className="h-[2px] shrink-0 bg-[#fbf0a2]" />
        <div className="flex-1 min-h-0 flex pl-[4px]">
          {/* left panel */}
          <div className="w-[987px] shrink-0 h-full bg-[#d4dbe8] flex flex-col border-l border-[#b7c0cf] border-r border-r-[#8a95a6] pl-[5px]">
            <div className="h-[33px] shrink-0 flex items-center text-[12px] text-[#27344a]">
              <span className="ml-[2px] w-[48px]">Symbol</span>
              <Select w="w-[66px]" label="VIX" />
              <span className="ml-[8px] w-[106px] whitespace-nowrap">Open Position (1)</span>
              <Select w="w-[170px]" label="#807 Custom" />
              <div className="flex-1" />
              <svg width="15" height="15" viewBox="0 0 15 15"><rect x="0.5" y="0.5" width="11" height="13" fill="#f3f6fd" stroke="#8ea4c8" /><circle cx="10" cy="10" r="4.5" fill="#8cc04a" stroke="#5f9425" /><path d="M8 10h4M10 8v4" stroke="#fff" /></svg>
              <span className="ml-[5px] mr-[24px]">Commit</span>
              <svg width="16" height="16" viewBox="0 0 16 16"><circle cx="6.5" cy="6.5" r="5" fill="#cfe3f8" stroke="#5a8fd0" strokeWidth="1.3" /><path d="M10 10l5 5" stroke="#d8963a" strokeWidth="2.2" /></svg>
              <svg width="16" height="15" viewBox="0 0 16 15" className="ml-[9px]"><rect x="0.5" y="2" width="6" height="11" fill="#c7e07d" stroke="#6d9a27" /><path d="M2 7.5h3M3.5 6v3" stroke="#3e7a10" /><rect x="8.5" y="1" width="7" height="13" fill="#eef2fa" stroke="#5c7ba8" /><path d="M8.5 5.5h7M8.5 9.5h7" stroke="#5c7ba8" /></svg>
              <svg width="17" height="17" viewBox="0 0 17 17" className="ml-[10px]"><circle cx="8.5" cy="8.5" r="8" fill="#d8343a" stroke="#a81d22" /><path d="M5.5 5.5l6 6M11.5 5.5l-6 6" stroke="#fff" strokeWidth="2.4" /></svg>
              <Gear size={15} strokeWidth={2} className="ml-[24px] mr-[14px] text-[#767d88] fill-[#c3c8d0]" />
            </div>
            <div className="h-[41px] shrink-0 flex w-[967px]">
              <div className="w-[632px] shrink-0 h-full border border-[#9faab9] bg-white flex flex-col">
                <div className="h-[21px] bg-[#f6f8fd] border-b border-[#c8cfe0] flex">
                  {tdTop.map((h) => <div key={h} className={`${hdrCell} w-[57px]`}>{h}</div>)}
                  <div className={`${hdrCell} w-[57px]`}>Model</div>
                  <div className={`${hdrCell} w-[60px] border-r-0`}>Position</div>
                </div>
                <div className="flex-1 flex">
                  {tdVal.map(([v, c], i) => <div key={i} className={`${numCell} w-[57px] ${c}`}>{v}</div>)}
                  <div className={`${numCell} w-[57px]`} />
                </div>
              </div>
              <div className="w-[331px] ml-[4px] shrink-0 h-full border border-[#9faab9] bg-white flex flex-col">
                <div className="h-[21px] bg-[#f6f8fd] border-b border-[#c8cfe0] flex">
                  {td2.map(([h], i) => <div key={h} className={`${hdrCell} ${i === 4 ? 'w-[69px] border-r-0' : 'w-[65px]'}`}>{h}</div>)}
                </div>
                <div className="flex-1 flex">
                  {td2.map(([h, v], i) => <div key={h} className={`${numCell} ${i === 4 ? 'w-[69px] border-r-0' : 'w-[65px]'} ${INK}`}>{v}</div>)}
                </div>
              </div>
            </div>
            <Splitter h="h-[12px]" />
            <div className="h-[327px] shrink-0 flex gap-[4px]">
              <StrikeCol head="CALLS" title rows={callsL.map((r) => r[0])} gray={(k) => k <= 18} />
              <div className="-mr-[1px]"><LeftGrid rows={callsL} title cream /></div>
              <RightGrid rows={callsR} band={bandC} title thumbTop="h-[174px]" thumbH="h-[64px]" />
            </div>
            <Splitter h="h-[13px]" />
            <div className="h-[314px] shrink-0 flex gap-[4px]">
              <StrikeCol head="PUTS" rows={putsL.map((r) => r[0])} gray={(k) => k >= 19} />
              <div className="-mr-[1px]"><LeftGrid rows={putsL} /></div>
              <RightGrid rows={putsR} band={bandP} thumbTop="h-[183px]" thumbH="h-[75px]" />
            </div>
            <Splitter h="h-[12px]" />
            <div className="h-[26px] shrink-0 flex items-center text-[12px] text-[#27344a] pr-[14px]">
              <span className="ml-[3px] w-[86px] whitespace-nowrap">Trade Analysis</span>
              <Select w="w-[149px]" label="Combined" />
              <div className="ml-[9px]"><Select w="w-[80px]" label="Auto" /></div>
              <div className="flex-1" />
              <div className="w-[13px] h-[13px] bg-white border border-[#8f99a8]" />
              <span className="ml-[5px] whitespace-nowrap">Ignore Today's Trades</span>
            </div>
            <div className="h-[59px] shrink-0 -ml-[3px] w-[972px] border border-[#9faab9] bg-white flex flex-col overflow-hidden">
              <div className="h-[20px] shrink-0 bg-[#f6f8fd] border-b border-[#c8cfe0] flex">
                {taHead.map((h, i) => <div key={h} className={`${hdrCell} ${taCols[i]}`}>{h}</div>)}
              </div>
              {taRows.map((r) => (
                <div key={r.name} className={rowCls}>
                  <div className={`${hdrCell} ${taCols[0]} !justify-start pl-[1px]`}>
                    <div className="w-[10px] h-[10px] border border-[#8f99a8] flex items-center justify-center shrink-0 mr-[4px]"><Plus size={8} strokeWidth={2} className="text-[#4a5568]" /></div>
                    <span className={r.color}>{r.name}</span>
                  </div>
                  {r.vals.map((v, i) => (
                    <div key={i} className={`${numCell} ${taCols[i + 1]} ${i === 4 || i === 5 ? RED : INK} ${v === '-2.39' ? 'bg-[#ff0000]' : ''}`}>{v}</div>
                  ))}
                  <div className={`${hdrCell} ${taCols[12]}`}>
                    <div className="w-[14px] h-[14px] bg-[#f7f8fb] border border-[#8f99a8] flex items-center justify-center"><Check size={12} strokeWidth={2} className="text-[#7a8494]" /></div>
                  </div>
                </div>
              ))}
            </div>
          </div>
          {/* right panel */}
          <div className="flex-1 min-w-0 h-full bg-[#d4dbe8] flex flex-col">
            <div className="h-[28px] shrink-0 flex items-end border-b border-[#9faab9]">
              {tabs.map(([t, w]) => (
                <div key={t} className={`${w} h-[26px] -mb-px border border-l-0 first:border-l border-[#9faab9] flex items-center justify-center text-[11.5px] text-[#27344a] whitespace-nowrap ${t === 'Risk Chart' ? 'border-b-[#d4dbe8]' : ''}`}>{t}</div>
              ))}
            </div>
            <div className="h-[26px] shrink-0 flex items-center pl-[6px] pr-[6px] text-[12px] text-[#27344a]">
              <span className="w-[62px] whitespace-nowrap">Vol Adjust</span>
              <div className="w-[52px] h-[20px] bg-white border border-[#9faab9] flex items-center justify-end text-[#111]">
                <span className="pr-[10px]">0</span>
                <div className="w-[13px] flex flex-col items-center"><ChevronUp size={9} strokeWidth={3} className="text-[#5a6678]" /><ChevronDown size={9} strokeWidth={3} className="text-[#5a6678]" /></div>
              </div>
              <div className="flex-1" />
              <span className="mr-[6px]">Projection</span>
              <div className="w-[180px] h-[20px] bg-white border border-[#9faab9] flex items-center pl-[3px] text-[#111]">
                <span className="w-[68px]">19/05/2026</span>
                <Caret />
                <span className="ml-[10px] w-[29px]">T+0</span>
                <span className="w-[26px]">4Ln</span>
                <svg width="6" height="9" viewBox="0 0 6 9" className="ml-[2px]"><path d="M5.5 0.5v8L0.5 4.5z" fill="#222" /></svg>
                <svg width="6" height="9" viewBox="0 0 6 9" className="ml-[9px]"><path d="M0.5 0.5v8L5.5 4.5z" fill="#222" /></svg>
              </div>
            </div>
            <Chart />
            <div className="flex-1 bg-[#29374f] flex items-center justify-end text-[13px] text-[#f3efd0] pr-[10px]">
              <span>100%</span>
              <div className="ml-[10px] w-[7px] h-[1px] bg-[#d8dde6]" />
              <div className="ml-[7px] w-[97px] h-[1px] bg-[#f3efd0] flex items-center pl-[46px]"><div className="w-[3px] h-[9px] bg-[#f8efb8] shrink-0" /></div>
              <Plus size={9} strokeWidth={2} className="ml-[6px] text-[#d8dde6]" />
            </div>
          </div>
        </div>
      </div>
    </div>
  );
}
